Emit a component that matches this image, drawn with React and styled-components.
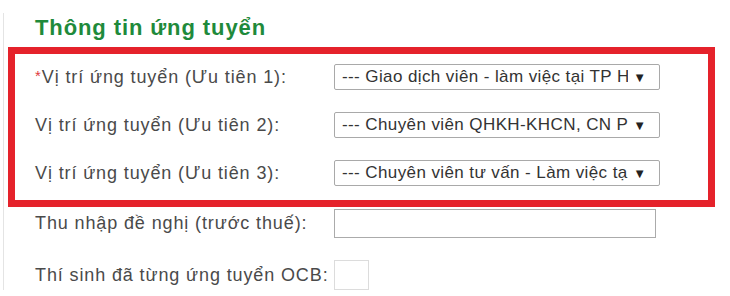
import React from "react";
import styled, { createGlobalStyle } from "styled-components";

const Global = createGlobalStyle`
  html, body { margin: 0; padding: 0; background: #fff; }
  body { font-family: "Liberation Sans", Arial, sans-serif; }
`;

const Panel = styled.div`
  width: 730px;
  height: 296px;
  box-sizing: border-box;
  position: relative;
  overflow: hidden;
  padding: 0 0 0 8px;
  &::before {
    content: "";
    position: absolute;
    left: 3px;
    top: 13px;
    bottom: 6px;
    width: 1px;
    background: #e4e4e4;
  }
`;

const Title = styled.h2`
  margin: 0;
  padding: 15px 0 0 27px;
  height: 32px;
  font-size: 22px;
  line-height: 25px;
  letter-spacing: 0.9px;
  font-weight: bold;
  color: #1f8a3b;
`;

const Highlight = styled.div`
  width: 707px;
  box-sizing: border-box;
  border: 7px solid #e5222b;
  padding: 10px 0 14px 20px;
  display: flex;
  flex-direction: column;
  gap: 22px;
`;

const Row = styled.div`
  display: flex;
  align-items: center;
  height: ${(p) => p.$h || 26}px;
`;

const Label = styled.div`
  width: 299px;
  flex: none;
  font-size: 18px;
  letter-spacing: 0.88px;
  color: #4a4a4a;
  white-space: nowrap;
`;

const Star = styled.span`
  color: #e0393e;
  font-size: 15px;
  letter-spacing: 0;
  margin-right: 1px;
  vertical-align: 2px;
`;

const FakeSelect = styled.div`
  width: 326px;
  height: 26px;
  box-sizing: border-box;
  border: 1px solid #a9a9a9;
  border-radius: 2px;
  background: #fff;
  display: flex;
  align-items: center;
  padding: 0 13px 0 7px;
  font-size: 17px;
  letter-spacing: 0.4px;
  color: #333;
`;

const SelectText = styled.span`
  flex: 1;
  min-width: 0;
  overflow: hidden;
  white-space: nowrap;
`;

const Arrow = styled.span`
  flex: none;
  margin-left: 5px;
  font-size: 13px;
  letter-spacing: 0;
  color: #222;
`;

const Below = styled.div`
  padding: 2px 0 0 27px;
  display: flex;
  flex-direction: column;
  gap: 22px;
`;

const TextInput = styled.div`
  width: 322px;
  height: 29px;
  box-sizing: border-box;
  border: 1px solid #ababab;
  background: #fff;
`;

const Box = styled.div`
  width: 35px;
  height: 30px;
  box-sizing: border-box;
  border: 1px solid #dcdcdc;
  background: #fff;
`;

const selects = [
  { label: "Vị trí ứng tuyển (Ưu tiên 1):", req: true, value: "--- Giao dịch viên - làm việc tại TP Hồ Chí Minh ---" },
  { label: "Vị trí ứng tuyển (Ưu tiên 2):", value: "--- Chuyên viên QHKH-KHCN, CN Phú Nhuận ---" },
  { label: "Vị trí ứng tuyển (Ưu tiên 3):", value: "--- Chuyên viên tư vấn - Làm việc tại Hà Nội ---" },
];

export default function App() {
  return (
    <>
      <Global />
      <Panel>
        <Title>Thông tin ứng tuyển</Title>
        <Highlight>
          {selects.map((s) => (
            <Row key={s.label}>
              <Label>
                {s.req && <Star>*</Star>}
                {s.label}
              </Label>
              <FakeSelect>
                <SelectText>{s.value}</SelectText>
                <Arrow>▼</Arrow>
              </FakeSelect>
            </Row>
          ))}
        </Highlight>
        <Below>
          <Row $h={29}>
            <Label>Thu nhập đề nghị (trước thuế):</Label>
            <TextInput />
          </Row>
          <Row $h={30}>
            <Label>Thí sinh đã từng ứng tuyển OCB:</Label>
            <Box />
          </Row>
        </Below>
      </Panel>
    </>
  );
}
